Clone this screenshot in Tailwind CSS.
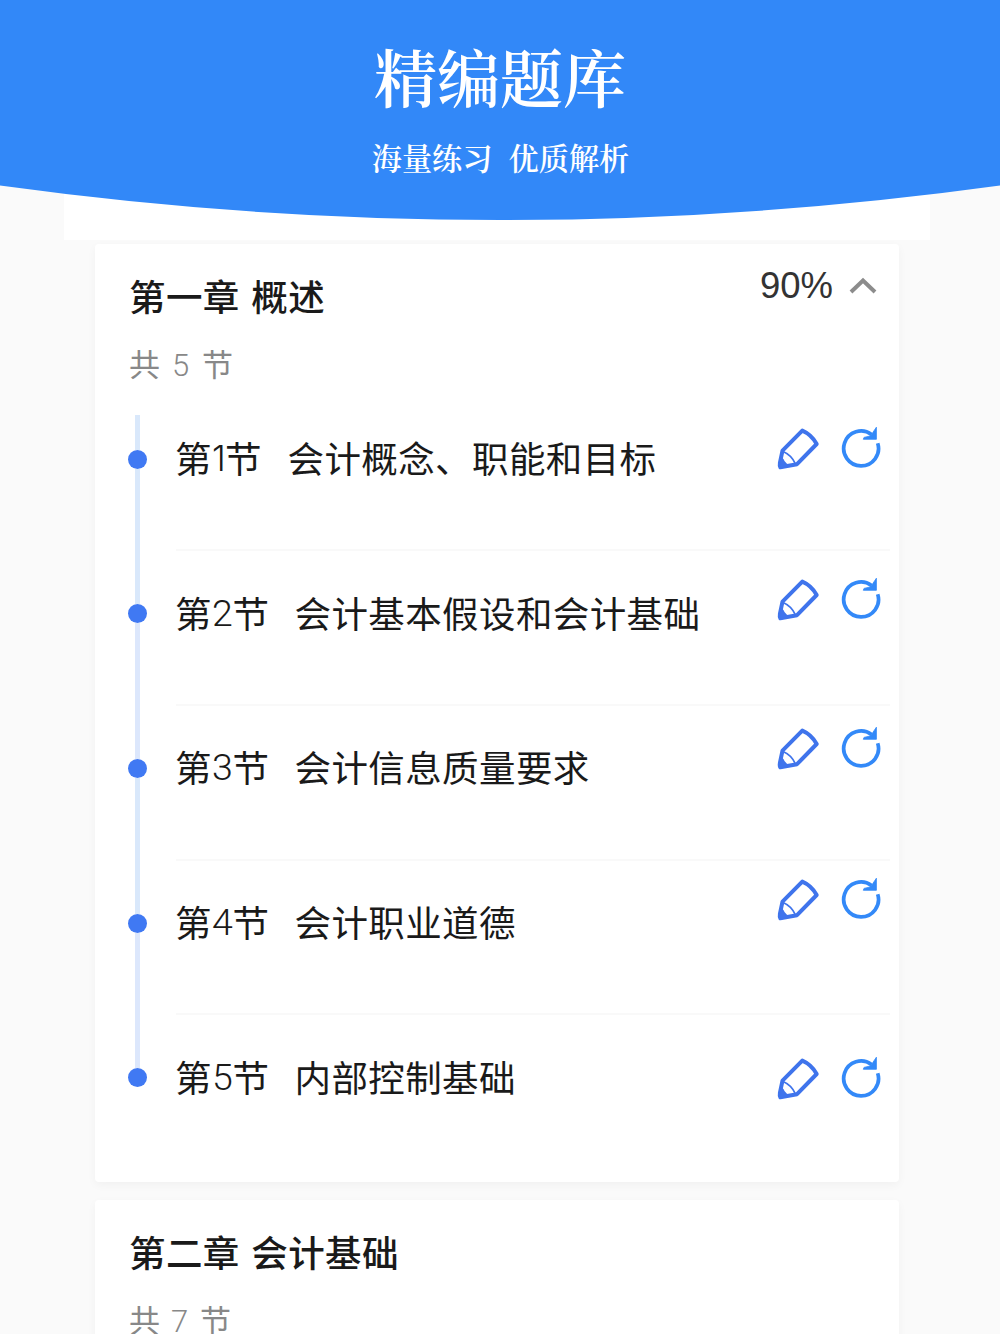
<!DOCTYPE html>
<html lang="zh-CN">
<head>
<meta charset="utf-8">
<title>精编题库</title>
<script src="https://cdn.jsdelivr.net/npm/@tailwindcss/browser@4"></script>
</head>
<body class="w-[1000px] h-[1334px] overflow-hidden bg-[#fafafa] font-['Noto_Sans_CJK_SC',sans-serif] text-[#1a1a1a]">
<svg width="0" height="0" class="absolute">
  <symbol id="pencil" viewBox="0 0 43 43">
    <path d="M25.300 2.600Q34.500 6.500 39.700 16L20 36.200L3.300 39.300Q2.400 38 2.900 35L5.500 22.600Z" fill="none" stroke="#3f74ec" stroke-width="4" stroke-linejoin="round"/>
    <path d="M6 23.500Q14.500 27 18.500 36" fill="none" stroke="#3f74ec" stroke-width="1.800"/>
    <path d="M3.500 29.500Q6 29 7.500 33L11.500 37.500L3 40Z" fill="#3f74ec"/>
  </symbol>
  <symbol id="redo" viewBox="0 0 40 43">
    <path d="M36.700 17.200A17.400 17.400 0 1 1 30.500 8.500" fill="none" stroke="#3389f8" stroke-width="3.700"/>
    <path d="M35.400 1.200V13.300H22.300L23 11.400L29 10L31.700 6.700Z" fill="#3389f8" stroke="#3389f8" stroke-width=".8"/>
  </symbol>
</svg>

<header class="grid h-[240px]">
  <svg class="col-start-1 row-start-1" width="1000" height="240">
    <rect x="64" y="150" width="866" height="90" fill="#fff"/>
    <path d="M0 0H1000V185.500Q500 254.500 0 185.500Z" fill="#3288f8"/>
  </svg>
  <div class="col-start-1 row-start-1 z-10 flex flex-col items-center text-white font-['Noto_Serif_CJK_SC','Noto_Sans_CJK_SC',serif]">
    <h1 class="mt-[30px] h-[90px] leading-[90px] text-[63px] font-semibold">精编题库</h1>
    <p class="mt-[17px] ml-px h-10 leading-10 text-[30.200px] font-semibold flex gap-[16px]"><span>海量练习</span><span>优质解析</span></p>
  </div>
</header>

<main class="ml-[95px] mt-1 w-[804px] flex flex-col gap-[18px]">
  <section class="h-[938px] rounded bg-white shadow-[0_3px_10px_rgba(0,0,0,0.04)]">
    <div class="flex justify-between pl-[34px] pr-[22px] h-[151.500px]">
      <div>
        <h2 class="mt-[26px] h-[52px] leading-[52px] text-[36.500px] tracking-[0.400px] font-medium [word-spacing:3px]">第一章 概述</h2>
        <p class="mt-[19px] h-[44px] leading-[44px] text-[31px] text-[#888888] [word-spacing:5px]">共 <span class="font-['Roboto'] font-light tracking-[1px]">5</span> 节</p>
      </div>
      <div class="flex h-[50px] mt-[17px] items-center gap-[16px]">
        <span class="text-[36.500px] font-['Liberation_Sans'] text-[#333]">90%</span>
        <svg width="28" height="18" fill="none" stroke="#8c8c8c" stroke-width="4"><path d="M2 15L14 3.500L26 15"/></svg>
      </div>
    </div>
    <ul class="text-[36.500px] tracking-[0.400px] leading-[52px]">
      <li class="flex h-[154.700px] pl-[32.500px]">
        <div class="flex flex-col items-center w-[20px] pt-[19.500px]"><i class="w-[5px] h-[34.500px] bg-[#d9e8fb]"></i><i class="size-[19px] rounded-full bg-[#4079f3]"></i><i class="w-[5px] flex-1 bg-[#d9e8fb]"></i></div>
        <div class="flex ml-[28.500px] w-[714px]">
          <div class="flex flex-1 pt-[36px] -ml-px"><span class="w-[112.500px] flex">第<span class="w-[13px] text-[35px] font-['Inter'] font-light">1</span>节</span><span>会计概念、职能和目标</span></div>
          <div class="flex gap-[21px] pt-[30.500px] pr-[9px]"><svg class="mt-0.5" width="43" height="43"><use href="#pencil"/></svg><svg width="40" height="43"><use href="#redo"/></svg></div>
        </div>
      </li>
      <li class="flex h-[154.700px] pl-[32.500px]">
        <div class="flex flex-col items-center w-[20px]"><i class="w-[5px] h-[54px] bg-[#d9e8fb]"></i><i class="size-[19px] rounded-full bg-[#4079f3]"></i><i class="w-[5px] flex-1 bg-[#dce7fc]"></i></div>
        <div class="flex ml-[28.500px] w-[714px] border-t-2 border-[#f9f9f9] -mt-px">
          <div class="flex flex-1 pt-[35.500px] -ml-px"><span class="w-[119.500px] flex">第<span class="w-[20.500px] font-['Roboto'] font-light text-[37.500px]">2</span>节</span><span>会计基本假设和会计基础</span></div>
          <div class="flex gap-[21px] pt-[26px] pr-[9px]"><svg class="mt-0.5" width="43" height="43"><use href="#pencil"/></svg><svg width="40" height="43"><use href="#redo"/></svg></div>
        </div>
      </li>
      <li class="flex h-[154.700px] pl-[32.500px]">
        <div class="flex flex-col items-center w-[20px]"><i class="w-[5px] h-[54px] bg-[#dce7fc]"></i><i class="size-[19px] rounded-full bg-[#4079f3]"></i><i class="w-[5px] flex-1 bg-[#d9e8fb]"></i></div>
        <div class="flex ml-[28.500px] w-[714px] border-t-2 border-[#f9f9f9] -mt-px">
          <div class="flex flex-1 pt-[35.500px] -ml-px"><span class="w-[119.500px] flex">第<span class="w-[20.500px] font-['Roboto'] font-light text-[37.500px]">3</span>节</span><span>会计信息质量要求</span></div>
          <div class="flex gap-[21px] pt-[20px] pr-[9px]"><svg class="mt-0.5" width="43" height="43"><use href="#pencil"/></svg><svg width="40" height="43"><use href="#redo"/></svg></div>
        </div>
      </li>
      <li class="flex h-[154.700px] pl-[32.500px]">
        <div class="flex flex-col items-center w-[20px]"><i class="w-[5px] h-[54px] bg-[#d9e8fb]"></i><i class="size-[19px] rounded-full bg-[#4079f3]"></i><i class="w-[5px] flex-1 bg-[#dce7fc]"></i></div>
        <div class="flex ml-[28.500px] w-[714px] border-t-2 border-[#f9f9f9] -mt-px">
          <div class="flex flex-1 pt-[35.500px] -ml-px"><span class="w-[119.500px] flex">第<span class="w-[20.500px] font-['Roboto'] font-light text-[37.500px]">4</span>节</span><span>会计职业道德</span></div>
          <div class="flex gap-[21px] pt-[16.500px] pr-[9px]"><svg class="mt-0.5" width="43" height="43"><use href="#pencil"/></svg><svg width="40" height="43"><use href="#redo"/></svg></div>
        </div>
      </li>
      <li class="flex h-[154.700px] pl-[32.500px]">
        <div class="flex flex-col items-center w-[20px]"><i class="w-[5px] h-[54px] bg-[#dce7fc]"></i><i class="size-[19px] rounded-full bg-[#4079f3]"></i></div>
        <div class="flex ml-[28.500px] w-[714px] border-t-2 border-[#f9f9f9] -mt-px">
          <div class="flex flex-1 pt-[35.500px] -ml-px"><span class="w-[119.500px] flex">第<span class="w-[20.500px] font-['Roboto'] font-light text-[37.500px]">5</span>节</span><span>内部控制基础</span></div>
          <div class="flex gap-[21px] pt-[41px] pr-[9px]"><svg class="mt-0.5" width="43" height="43"><use href="#pencil"/></svg><svg width="40" height="43"><use href="#redo"/></svg></div>
        </div>
      </li>
    </ul>
  </section>
  <section class="h-[200px] rounded bg-white shadow-[0_3px_10px_rgba(0,0,0,0.04)] pl-[34px]">
    <h2 class="mt-[26px] h-[52px] leading-[52px] text-[36.500px] tracking-[0.400px] font-medium [word-spacing:3px]">第二章 会计基础</h2>
    <p class="mt-[19px] h-[44px] leading-[44px] text-[31px] text-[#888888] [word-spacing:4px]">共 <span class="font-['Roboto'] font-light tracking-[1px]">7</span> 节</p>
  </section>
</main>
</body>
</html>
